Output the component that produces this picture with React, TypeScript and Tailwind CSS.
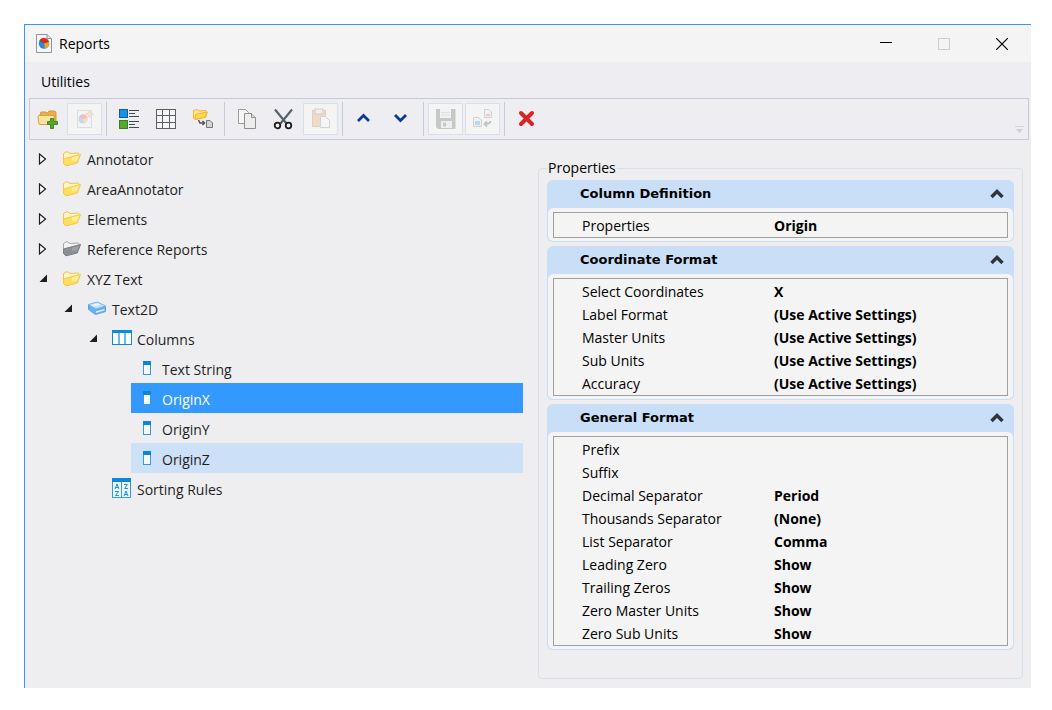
import React from "react";

type IconName = "folder" | "grayFolder" | "layer" | "columns" | "column" | "sort";

interface TreeNode {
  label: string;
  icon: IconName;
  open?: boolean;
  leaf?: boolean;
  state?: "selected" | "hover";
  children?: TreeNode[];
}

const tree: TreeNode[] = [
  { label: "Annotator", icon: "folder" },
  { label: "AreaAnnotator", icon: "folder" },
  { label: "Elements", icon: "folder" },
  { label: "Reference Reports", icon: "grayFolder" },
  {
    label: "XYZ Text",
    icon: "folder",
    open: true,
    children: [
      {
        label: "Text2D",
        icon: "layer",
        open: true,
        children: [
          {
            label: "Columns",
            icon: "columns",
            open: true,
            children: [
              { label: "Text String", icon: "column", leaf: true },
              { label: "OriginX", icon: "column", leaf: true, state: "selected" },
              { label: "OriginY", icon: "column", leaf: true },
              { label: "OriginZ", icon: "column", leaf: true, state: "hover" },
            ],
          },
          { label: "Sorting Rules", icon: "sort", leaf: true },
        ],
      },
    ],
  },
];

const groups = [
  { title: "Column Definition", rows: [["Properties", "Origin"]] },
  {
    title: "Coordinate Format",
    rows: [
      ["Select Coordinates", "X"],
      ["Label Format", "(Use Active Settings)"],
      ["Master Units", "(Use Active Settings)"],
      ["Sub Units", "(Use Active Settings)"],
      ["Accuracy", "(Use Active Settings)"],
    ],
  },
  {
    title: "General Format",
    rows: [
      ["Prefix", ""],
      ["Suffix", ""],
      ["Decimal Separator", "Period"],
      ["Thousands Separator", "(None)"],
      ["List Separator", "Comma"],
      ["Leading Zero", "Show"],
      ["Trailing Zeros", "Show"],
      ["Zero Master Units", "Show"],
      ["Zero Sub Units", "Show"],
    ],
  },
];

/* ---------- Tree icons ---------- */

const FolderIcon: React.FC<{ gray?: boolean }> = ({ gray }) => (
  <svg width="20" height="18" viewBox="0 0 20 18">
    <path
      d="M1.5 4.5 L5 2.5 L8 4.5 L16 4 Q17 4 16.8 5.5 L14 14 L4 16.5 L1.5 14.5 Z"
      fill={gray ? "#f2f2f2" : "#fff6c4"}
      stroke={gray ? "#a8a8a8" : "#f7c04e"}
    />
    <path
      d="M5 9 L18.6 5.5 L15.2 14 L4 16.8 L1.5 14.5 V10 Z"
      fill={gray ? "#8b8e92" : "#ffe05e"}
      stroke={gray ? "#7c7f83" : "#f9c54f"}
    />
    <path d="M10 8.6 L17 6.8 L15 11.5 L10 12 Z" fill={gray ? "#9da0a4" : "#fff09a"} />
  </svg>
);

const LayerIcon: React.FC = () => (
  <svg width="20" height="18" viewBox="0 0 20 18">
    <path d="M1.5 5.5 V10.5 L8.5 15.5 L18.5 12.5 V7.5 L9.5 10 Z" fill="#6db1f2" stroke="#5a9fe6" />
    <path d="M9 12.2 L17.5 9.9 V11.5 L9 14 Z" fill="#d9ecff" />
    <path d="M1.5 5.5 L10.5 3 L18.5 7 L9 10 Z" fill="#c6e2fd" stroke="#79b5ef" />
    <path d="M4.5 6 L10.5 4.4 L13 5.7 L6 7.6 Z" fill="#eaf5ff" />
  </svg>
);

const ColumnsIcon: React.FC = () => (
  <svg width="20" height="16" viewBox="0 0 20 16">
    <rect x="0.5" y="0.5" width="19" height="14" fill="#fff" stroke="#0c8ae0" />
    <rect width="20" height="3" fill="#0c8ae0" />
    <path d="M7 3 V15 M13 3 V15" stroke="#0c8ae0" strokeWidth="1.2" />
  </svg>
);

const ColumnIcon: React.FC = () => (
  <svg width="8" height="16" viewBox="0 0 8 16">
    <rect x="0.5" y="1.5" width="7" height="13" fill="#f6faff" stroke="#2f9cea" />
    <rect y="1" width="8" height="4" fill="#0c86da" />
  </svg>
);

const SortIcon: React.FC = () => (
  <svg width="20" height="20" viewBox="0 0 20 20">
    <rect x="0.5" y="0.5" width="18" height="19" fill="#eef7ff" stroke="#2f9cea" />
    <rect width="19" height="4" fill="#0c86da" />
    <path d="M9.5 4 V20" stroke="#2f9cea" />
    <g fill="none" stroke="#1f92e6">
      <path d="M3 11 L5 6 L7 11 M3.5 9.5 H6.5" />
      <path d="M3 13.5 H6.5 L3.5 17.5 H7" />
      <path d="M12 6.5 H15.5 L12.5 10.5 H16" />
      <path d="M12 18 L14 13 L16 18 M12.5 16.5 H15.5" />
    </g>
  </svg>
);

const NodeIcon: React.FC<{ icon: IconName }> = ({ icon }) => {
  if (icon === "folder") return <FolderIcon />;
  if (icon === "grayFolder") return <FolderIcon gray />;
  if (icon === "layer") return <LayerIcon />;
  if (icon === "columns") return <ColumnsIcon />;
  if (icon === "column") return <ColumnIcon />;
  return <SortIcon />;
};

/* ---------- Toolbar icons ---------- */

const ReportIcon: React.FC = () => (
  <svg width="18" height="20" viewBox="0 0 18 20">
    <path d="M0.5 0.5 H11 L15.5 4.5 V18.5 H0.5 Z" fill="#f4f6f8" stroke="#8d959c" />
    <path d="M11 0.5 V4.5 H15.5" fill="#dfe4e8" stroke="#8d959c" />
    <circle cx="8" cy="9.5" r="5.2" fill="#1d8fe0" />
    <path d="M8 9.5 L3.2 7 A5.2 5.2 0 0 1 13 8 Z" fill="#d92a1b" />
    <path d="M8 9.5 L13 8 A5.2 5.2 0 0 1 9 14.7 Z" fill="#f9a11b" />
  </svg>
);

const AddFolderIcon: React.FC = () => (
  <svg width="22" height="20" viewBox="0 0 22 20">
    <path d="M3 6 L4 3 H9 L10 4.5 L12 2 H17 Q19 2 19 4 V12 H3 Z" fill="#e7b04a" stroke="#d39a34" />
    <path d="M1 7.5 Q1 6.5 2 6.5 H17 L18 15.5 H3 Q2 15.5 2 15 Z" fill="#fce3a0" stroke="#dba23a" />
    <path
      d="M13.5 9.5 H16.5 V12.5 H20.5 V15.5 H16.5 V19.5 H13.5 V15.5 H10.5 V12.5 H13.5 Z"
      fill="#57a832"
      stroke="#3f8a22"
    />
  </svg>
);

const NewReportIcon: React.FC = () => (
  <svg width="20" height="20" viewBox="0 0 20 20" opacity="0.3">
    <path d="M2.5 1.5 H16.5 V18.5 H2.5 Z" fill="#f4f6f8" stroke="#a4abb2" />
    <circle cx="8" cy="10" r="4.5" fill="#4d9be0" />
    <path d="M8 10 L4.5 7 A4.5 4.5 0 0 1 12.5 9 Z" fill="#e04a3b" />
    <path d="M8 10 L12.5 9 A4.5 4.5 0 0 1 9.5 14.3 Z" fill="#f9b14b" />
    <path d="M14.5 1 L15.5 4 L18.5 5 L15.5 6 L14.5 9 L13.5 6 L10.5 5 L13.5 4 Z" fill="#ffc9a0" stroke="#f08c5a" />
  </svg>
);

const ListIcon: React.FC = () => (
  <svg width="22" height="22" viewBox="0 0 22 22">
    <rect x="1.5" y="1.5" width="8" height="8" fill="#1593e6" stroke="#0b5f9e" />
    <rect x="1.5" y="12.5" width="8" height="8" fill="#57a832" stroke="#3d7d20" />
    <path
      d="M11 2.5 H21 M11 5.5 H17 M11 8.5 H21 M11 13.5 H21 M11 16.5 H17 M11 19.5 H21"
      stroke="#3f4a53"
    />
  </svg>
);

const GridIcon: React.FC = () => (
  <svg width="22" height="22" viewBox="0 0 22 22">
    <rect x="1" y="1" width="20" height="20" fill="#f6f6f8" />
    <path
      d="M1.5 1 V21 M7.5 1 V21 M14.5 1 V21 M20.5 1 V21 M1 1.5 H21 M1 7.5 H21 M1 14.5 H21 M1 20.5 H21"
      stroke="#5b5f63"
    />
  </svg>
);

const MoveFolderIcon: React.FC = () => (
  <svg width="22" height="22" viewBox="0 0 22 22">
    <path d="M1.5 2.5 L5 1.5 L7 3 L14 2.5 V9 L3 11.5 L1.5 10 Z" fill="#ffe68a" stroke="#f2b632" />
    <path d="M3.5 6.5 L15.5 4 L13.5 9 L3 11.5 Z" fill="#ffd84f" stroke="#f2b632" />
    <path d="M6.5 12 L8 15 H12 M10.5 13 L12.5 15 L10.5 17" fill="none" stroke="#555" strokeWidth="1.5" />
    <path d="M14.5 12.5 H18 L20.5 15 V19.5 H14.5 Z" fill="#d4d4d4" stroke="#777" />
  </svg>
);

const CopyIcon: React.FC = () => (
  <svg width="22" height="22" viewBox="0 0 22 22">
    <path d="M2.5 1.5 H9.5 L12.5 4.5 V15.5 H2.5 Z" fill="#f6f6f6" stroke="#9b9b9b" />
    <path d="M8.5 5.5 H15.5 L19.5 9.5 V20.5 H8.5 Z" fill="#ededed" stroke="#8f8f8f" />
    <path d="M15.5 5.5 V9.5 H19.5" fill="#dadada" stroke="#8f8f8f" />
  </svg>
);

const CutIcon: React.FC = () => (
  <svg width="22" height="22" viewBox="0 0 22 22" fill="none">
    <path d="M2 1.5 L13.5 15.5 M19 1.5 L7.5 15.5" stroke="#56636c" strokeWidth="2.2" />
    <circle cx="4.5" cy="17.5" r="2.8" stroke="#1d1d1d" strokeWidth="1.8" />
    <circle cx="15.5" cy="17.5" r="2.8" stroke="#1d1d1d" strokeWidth="1.8" />
  </svg>
);

const PasteIcon: React.FC = () => (
  <svg width="22" height="22" viewBox="0 0 22 22" opacity="0.35">
    <rect x="2.5" y="2.5" width="13" height="16" fill="#dfae72" stroke="#c08d4e" />
    <rect x="5" y="1" width="8" height="5" fill="#e6e6e6" stroke="#888" />
    <path d="M10.5 8.5 H15.5 L19.5 12.5 V19.5 H10.5 Z" fill="#fafafa" stroke="#9b9b9b" />
  </svg>
);

const Chevron: React.FC<{ down?: boolean }> = ({ down }) => (
  <svg width="15" height="12" viewBox="0 0 15 12" fill="none">
    <path
      d={down ? "M1 2 L6.5 7.5 L12 2" : "M1 8 L6.5 2.5 L12 8"}
      stroke="#0b3a94"
      strokeWidth="2.8"
    />
  </svg>
);

const SaveIcon: React.FC = () => (
  <svg width="22" height="22" viewBox="0 0 22 22">
    <path d="M1 1 H20.5 V21 H3 L1 19 Z" fill="#c6c7c9" />
    <rect x="5" y="1" width="11" height="9" fill="#f2f2f2" />
    <path d="M6 4.5 H15 M6 7 H15" stroke="#dedede" />
    <rect x="6" y="13" width="11" height="7" fill="#eeeeee" />
    <rect x="8" y="14.5" width="3" height="4" fill="#c6c7c9" />
  </svg>
);

const SyncIcon: React.FC = () => (
  <svg width="22" height="22" viewBox="0 0 22 22" fill="none">
    <path d="M12.5 1.5 H17 L19.5 4 V9.5 H12.5 Z" fill="#f1f1f1" stroke="#d0d2d5" />
    <path d="M14 7 H18" stroke="#edc9c4" strokeWidth="2" />
    <path d="M1.5 9.5 H6 L9.5 12 V18.5 H1.5 Z" fill="#f1f1f1" stroke="#d0d2d5" />
    <path d="M3 15 H8" stroke="#b5d8f5" strokeWidth="4" />
    <path d="M18.5 13 Q18.5 16 12.5 16 M15 13.5 L12.5 16 L15 18.5" stroke="#c0c2c5" strokeWidth="1.8" />
  </svg>
);

const DeleteIcon: React.FC = () => (
  <svg width="18" height="18" viewBox="0 0 18 18">
    <path
      d="M3 3 L14 14 M14 3 L3 14"
      stroke="#dc2424"
      strokeWidth="4"
      strokeLinecap="round"
    />
  </svg>
);

const toolbar: { name: string; icon: React.ReactNode; disabled?: boolean }[][] = [
  [
    { name: "New folder", icon: <AddFolderIcon /> },
    { name: "New report", icon: <NewReportIcon />, disabled: true },
  ],
  [
    { name: "List view", icon: <ListIcon /> },
    { name: "Grid view", icon: <GridIcon /> },
    { name: "Move to folder", icon: <MoveFolderIcon /> },
  ],
  [
    { name: "Copy", icon: <CopyIcon /> },
    { name: "Cut", icon: <CutIcon /> },
    { name: "Paste", icon: <PasteIcon />, disabled: true },
  ],
  [
    { name: "Move up", icon: <Chevron /> },
    { name: "Move down", icon: <Chevron down /> },
  ],
  [
    { name: "Save", icon: <SaveIcon />, disabled: true },
    { name: "Update", icon: <SyncIcon />, disabled: true },
  ],
  [{ name: "Delete", icon: <DeleteIcon /> }],
];

/* ---------- Sections ---------- */

const TitleBar: React.FC = () => (
  <header className="flex h-[37px] items-center bg-[#f4f4f4] pl-[11px]">
    <ReportIcon />
    <h1 className="ml-[5px] flex-1">Reports</h1>
    <button aria-label="Minimize" className="flex h-full w-[58px] items-center justify-center">
      <svg width="12" height="12" viewBox="0 0 12 12">
        <path d="M0 4.5 H12" stroke="#000" />
      </svg>
    </button>
    <button aria-label="Maximize" disabled className="flex h-full w-[58px] items-center justify-center">
      <svg width="12" height="12" viewBox="0 0 12 12" fill="none">
        <rect x="0.5" y="0.5" width="11" height="11" stroke="#cdcdcd" />
      </svg>
    </button>
    <button aria-label="Close" className="flex h-full w-[58px] items-center justify-center">
      <svg width="12" height="12" viewBox="0 0 12 12">
        <path d="M0 0 L12 12 M12 0 L0 12" stroke="#000" strokeWidth="1.2" />
      </svg>
    </button>
  </header>
);

const Toolbar: React.FC = () => (
  <div
    role="toolbar"
    aria-label="Report tools"
    className="ml-1 mr-0.5 flex h-[42px] items-center gap-0.5 border border-[#c9c9dc] bg-[#ededf2]"
  >
    {toolbar.map((group, i) => (
      <React.Fragment key={i}>
        {i > 0 && <span className="mx-0.5 h-[34px] w-px bg-[#c9c9dc]" />}
        {group.map((item) => (
          <button
            key={item.name}
            aria-label={item.name}
            disabled={item.disabled}
            className="flex h-8 w-[35px] items-center justify-center border border-transparent disabled:border-[#d6e0ea] disabled:bg-[#f4f4f4]"
          >
            {item.icon}
          </button>
        ))}
      </React.Fragment>
    ))}
    <button aria-label="Toolbar options" className="ml-auto mr-1 self-end pb-1">
      <svg width="9" height="9" viewBox="0 0 9 9">
        <path d="M0 0.5 H9" stroke="#d4d4da" />
        <path d="M1 3 H8 L4.5 7 Z" fill="#cfcfd6" />
      </svg>
    </button>
  </div>
);

const Node: React.FC<{ node: TreeNode }> = ({ node }) => {
  const color =
    node.state === "selected"
      ? "bg-[#3399ff] text-white"
      : node.state === "hover"
        ? "bg-[#cce0f7]"
        : "";

  return (
    <li
      role="treeitem"
      aria-expanded={node.leaf ? undefined : !!node.open}
      aria-selected={node.state === "selected"}
    >
      <div className="flex h-[30px]">
        <div className="flex w-[21px] items-center pl-[3px] pt-0.5">
          {!node.leaf && (
            <button aria-label={`Toggle ${node.label}`}>
              <svg width="10" height="12" viewBox="0 0 10 12">
                {node.open ? (
                  <path d="M9 1.5 V9 H1.5 Z" fill="#1e1e1e" />
                ) : (
                  <path d="M1.5 1 L7.5 6 L1.5 11 Z" fill="#fff" stroke="#1e1e1e" strokeWidth="1.2" />
                )}
              </svg>
            </button>
          )}
        </div>
        <button className={`flex flex-1 items-center gap-[5px] pl-[6px] text-left ${color}`}>
          <span className="flex w-5 justify-center">
            <NodeIcon icon={node.icon} />
          </span>
          <span className="pt-1">{node.label}</span>
        </button>
      </div>
      {node.children && (
        <ul role="group" className="pl-[25px]">
          {node.children.map((child) => (
            <Node key={child.label} node={child} />
          ))}
        </ul>
      )}
    </li>
  );
};

const PropertyGroup: React.FC<{ title: string; rows: string[][] }> = ({ title, rows }) => (
  <section className="rounded-md bg-[#c9dff7]">
    <button className="flex h-7 w-full items-center justify-between pl-[33px] pr-[10px]">
      <span className="font-['DejaVu_Sans'] text-[13px] font-bold">{title}</span>
      <svg width="14" height="10" viewBox="0 0 14 10" fill="none">
        <path d="M1.5 8 L7 2.5 L12.5 8" stroke="#30353c" strokeWidth="3.4" />
      </svg>
    </button>
    <div className="rounded-md border border-t-0 border-[#c9dff7] bg-[#f4f4f4] px-[5px] pb-[3px] pt-1">
      <div className="border border-[#a0a0a0] pt-px">
        <table className="w-full table-fixed">
          <tbody>
            {rows.map(([label, value]) => (
              <tr key={label} className="h-[23px]">
                <th scope="row" className="w-[220px] pl-7 text-left font-normal">
                  {label}
                </th>
                <td className="font-bold">{value}</td>
              </tr>
            ))}
          </tbody>
        </table>
      </div>
    </div>
  </section>
);

const App: React.FC = () => {
  return (
    <div className="flex min-h-screen bg-white pb-[22px] pl-6 pr-[21px] pt-6 font-['Open_Sans','Noto_Sans',sans-serif] text-[14px] leading-5 text-black">
      <div className="flex-1 border-l border-t border-[#3399ff] bg-[#eeeef0]">
        <TitleBar />

        {/* Menu */}
        <nav className="flex h-9 items-center bg-[#ededf2] pl-4">
          <button className="pt-1">Utilities</button>
        </nav>

        <Toolbar />

        <main className="grid grid-cols-[1fr_485px] items-start gap-[15px] pl-[10px] pr-2">
          <ul role="tree" aria-label="Reports" className="pt-[3px] text-[#1e1e1e]">
            {tree.map((node) => (
              <Node key={node.label} node={node} />
            ))}
          </ul>

          <fieldset className="mt-[18px] rounded border border-[#d5e0e9] px-2 pb-7 pt-0.5">
            <legend className="px-px">Properties</legend>
            <div className="flex flex-col gap-1">
              {groups.map((group) => (
                <PropertyGroup key={group.title} title={group.title} rows={group.rows} />
              ))}
            </div>
          </fieldset>
        </main>
      </div>
    </div>
  );
};

export default App;
